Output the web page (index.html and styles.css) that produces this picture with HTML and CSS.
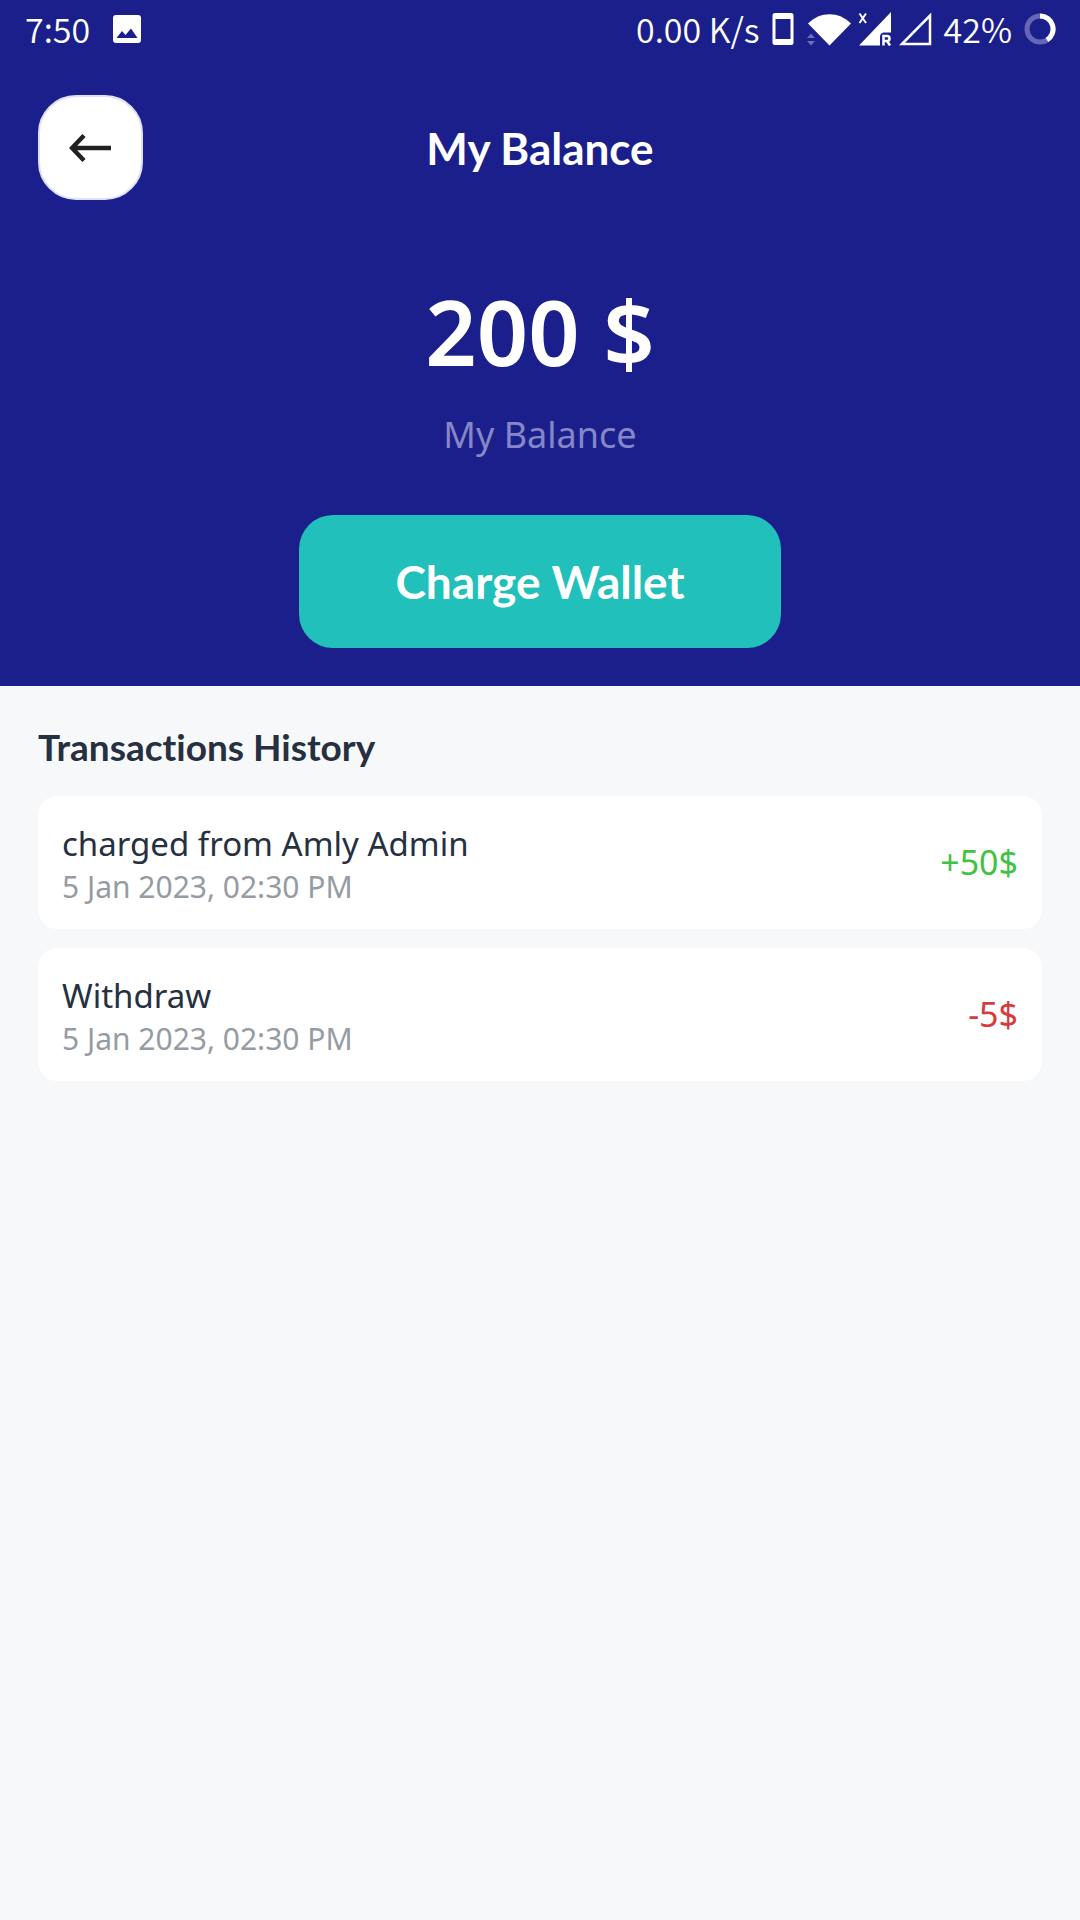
FILE: index.html
```html
<!DOCTYPE html>
<html lang="en">
<head>
<meta charset="utf-8">
<meta name="viewport" content="width=device-width, initial-scale=1">
<title>My Balance</title>
<link rel="stylesheet" href="styles.css">
</head>
<body>
<div class="screen">
  <header class="hero">
    <div class="status-bar">
      <div class="status-group">
        <span>7:50</span>
        <svg width="28" height="28" viewBox="0 0 28 28" aria-hidden="true">
          <rect width="28" height="28" rx="3" fill="#fff"/>
          <path d="M3.500 23 9 16l3.500 4L18 13.500 24.500 23z" fill="#1b1f8c"/>
        </svg>
      </div>
      <div class="status-group status-right">
        <span>0.00 K/s</span>
        <svg width="22" height="34" viewBox="0 0 22 34" aria-hidden="true">
          <path fill="#fff" fill-rule="evenodd" d="M3 1h16a2.500 2.500 0 0 1 2.500 2.500v27a2.500 2.500 0 0 1-2.500 2.500H3a2.500 2.500 0 0 1-2.500-2.500v-27A2.500 2.500 0 0 1 3 1zM3.500 7v20h15V7z"/>
        </svg>
        <div class="signals">
          <svg width="46" height="34" viewBox="0 0 46 34" aria-hidden="true">
            <path d="M2 11.500C14-1 33-1 45 11.500L23.500 33.500z" fill="#fff"/>
            <path d="M1 26l4-4.500 4 4.500zM1 29h8l-4 4.500z" fill="#6d6fbd"/>
          </svg>
          <svg width="34" height="34" viewBox="0 0 34 34" aria-hidden="true">
            <path d="M1 33.500 33 0v20.500h-6.500q-4.500 0-4.500 4.500v8.500z" fill="#fff"/>
            <path d="M1.500 1.500l6.500 9.500M8 1.500l-6.500 9.500" stroke="#fff" stroke-width="2" fill="none"/>
            <path d="M25.500 33.500V24h3.500a2.500 2.500 0 0 1 0 5h-3.500M29 29l3 4.500" stroke="#fff" stroke-width="2.500" fill="none"/>
          </svg>
          <svg width="34" height="34" viewBox="0 0 34 34" aria-hidden="true">
            <path d="M4 32 32 3.500V32z" stroke="#fff" stroke-width="2.500" fill="none"/>
          </svg>
        </div>
        <span>42%</span>
        <svg width="32" height="32" viewBox="0 0 32 32" aria-hidden="true">
          <circle cx="16" cy="16" r="13" stroke="#6567b6" stroke-width="5" fill="none"/>
          <path d="M16 3a13 13 0 0 1 7 24" stroke="#fff" stroke-width="5" fill="none"/>
        </svg>
      </div>
    </div>
    <div class="app-bar">
      <button class="back" type="button" aria-label="Back">
        <svg width="44" height="30" viewBox="0 0 44 30" aria-hidden="true">
          <path d="M4 15h38M15 2.500 3 15 15 27.500" stroke="#222" stroke-width="4.500" fill="none"/>
        </svg>
      </button>
      <h1>My Balance</h1>
    </div>
    <div class="balance">
      <p class="amount">200 $</p>
      <p class="caption">My Balance</p>
      <button class="charge" type="button">Charge Wallet</button>
    </div>
  </header>
  <main class="history">
    <h2>Transactions History</h2>
    <ul class="list">
      <li class="card">
        <div class="details">
          <p class="name">charged from Amly Admin</p>
          <time class="date" datetime="2023-01-05T14:30">5 Jan 2023, 02:30 PM</time>
        </div>
        <span class="sum credit">+50$</span>
      </li>
      <li class="card">
        <div class="details">
          <p class="name">Withdraw</p>
          <time class="date" datetime="2023-01-05T14:30">5 Jan 2023, 02:30 PM</time>
        </div>
        <span class="sum debit">-5$</span>
      </li>
    </ul>
  </main>
</div>
</body>
</html>
```
FILE: styles.css
```css
* {
  box-sizing: border-box;
}

body,
h1,
h2,
p,
ul {
  margin: 0;
  padding: 0;
}

body {
  background: #f6f8fa;
  color: #263040;
  font-family: "Noto Sans", "Open Sans", sans-serif;
}

button {
  border: 0;
  cursor: pointer;
}

svg {
  display: block;
  flex: none;
}

.screen {
  min-height: 100vh;
}

.hero {
  background: #1b1f8c;
  color: #fff;
  padding-bottom: 38px;
}

.status-bar {
  display: flex;
  justify-content: space-between;
  align-items: center;
  height: 57px;
  padding: 0 24px 0 25px;
  font-family: "Noto Sans CJK SC", "Noto Sans", sans-serif;
  font-size: 34px;
  font-weight: 350;
  line-height: 38px;
}

.status-group {
  display: flex;
  align-items: center;
  gap: 23px;
}

.status-right {
  gap: 12px;
}

.signals {
  display: flex;
  gap: 6px;
}

.app-bar {
  display: grid;
  grid-template-columns: 105px 1fr 105px;
  align-items: center;
  padding: 38px 38px 0;
}

.back {
  display: flex;
  align-items: center;
  justify-content: center;
  height: 105px;
  border: 2px solid #dfe0f5;
  border-radius: 38px;
  background: #fff;
}

h1,
h2,
.charge {
  font-family: Lato, "Noto Sans", sans-serif;
  font-weight: 700;
  font-variant-ligatures: none;
}

h1 {
  font-size: 44px;
  line-height: 60px;
  text-align: center;
}

.balance {
  display: flex;
  flex-direction: column;
  align-items: center;
  padding-top: 71px;
}

.amount {
  font-size: 90px;
  font-weight: 600;
  line-height: 120px;
}

.caption {
  margin-top: 20px;
  color: #8587c7;
  font-size: 36px;
  line-height: 48px;
}

.charge {
  min-width: 482px;
  margin-top: 56px;
  padding: 36px 48px;
  border-radius: 34px;
  background: #21c0ba;
  color: #fff;
  font-size: 46px;
  line-height: 61px;
}

.history {
  padding: 36px 38px;
}

h2 {
  font-size: 37px;
  line-height: 50px;
}

.list {
  display: flex;
  flex-direction: column;
  gap: 19px;
  margin-top: 24px;
  list-style: none;
}

.card {
  display: flex;
  align-items: center;
  justify-content: space-between;
  padding: 24px;
  border-radius: 19px;
  background: #fff;
}

.details {
  display: grid;
  gap: 2px;
}

.name {
  font-size: 33px;
  line-height: 47px;
}

.sum {
  font-size: 34px;
  line-height: 45px;
}

.date {
  color: #959ca3;
  font-size: 30px;
  line-height: 36px;
}

.credit {
  color: #43c143;
}

.debit {
  color: #d63a3c;
}
```
